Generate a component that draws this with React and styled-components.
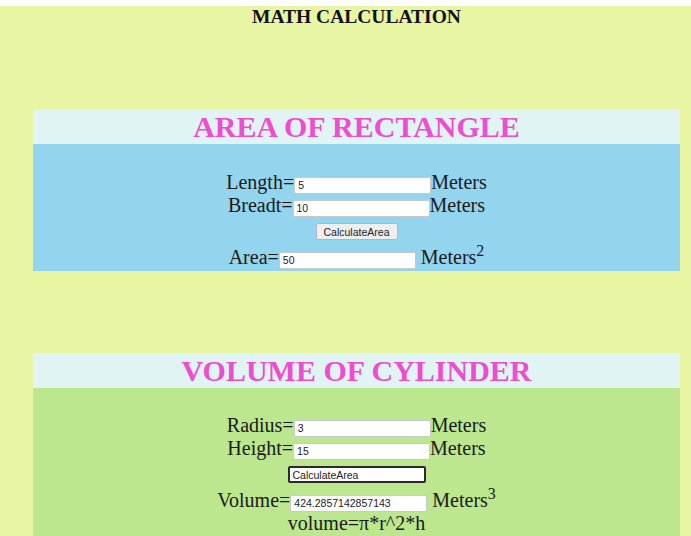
import React from 'react'
import styled, { createGlobalStyle } from 'styled-components'

const GlobalStyle = createGlobalStyle`
  html, body {
    margin: 0;
    padding: 0;
    background: #ffffff;
  }
  body {
    font-family: 'Liberation Serif', 'Times New Roman', serif;
    color: #1a1a1a;
  }
`

const Page = styled.div`
  margin-top: 6px;
  min-height: 530px;
  background: #e8f5a2;
  overflow: hidden;
`

const Column = styled.div`
  margin-left: 33px;
  width: 647px;
  display: flex;
  flex-direction: column;
`

const PageTitle = styled.h3`
  margin: 0;
  font-size: 19.5px;
  line-height: 22px;
  font-weight: bold;
  text-align: center;
  color: #111122;
`

const Card = styled.section`
  margin-top: ${(props) => props.$gap}px;
  display: flex;
  flex-direction: column;
`

const CardHeader = styled.div`
  background: #e0f4f4;
  height: 35px;
  display: flex;
  align-items: center;
  justify-content: center;
`

const CardTitle = styled.h1`
  margin: 0;
  font-size: 30px;
  line-height: 35px;
  font-weight: bold;
  color: #ef4cd2;
`

const CardBody = styled.div`
  background: ${(props) => props.$bg};
  padding: ${(props) => props.$top}px 0 2px;
  display: flex;
  flex-direction: column;
`

const Row = styled.div`
  height: 23px;
  display: flex;
  justify-content: center;
  align-items: baseline;
  font-size: 20px;
  line-height: 23px;
  white-space: pre;
`

const Unit = styled.span`
  margin-left: ${(props) => (props.$spaced ? '5px' : '0')};

  sup {
    font-size: 0.8em;
    line-height: 0;
    vertical-align: 0.5em;
  }
`

const ButtonRow = styled.div`
  height: 29px;
  display: flex;
  justify-content: center;
  align-items: center;
`

const Field = styled.input`
  box-sizing: border-box;
  width: 137px;
  height: 17px;
  padding: 0 3px;
  border: 1px solid #c9c9c9;
  border-radius: 2px;
  background: #ffffff;
  font-family: 'Liberation Sans', Arial, sans-serif;
  font-size: 10.5px;
  color: #222;
  outline: none;
`

const CalcButton = styled.button`
  box-sizing: border-box;
  width: ${(props) => (props.$focused ? '138px' : '82px')};
  height: 17px;
  padding: 0 ${(props) => (props.$focused ? '3px' : '6px')};
  border: ${(props) =>
    props.$focused ? '2px solid #2a2a2a' : '1px solid #b5b5b5'};
  border-radius: 2px;
  background: ${(props) => (props.$focused ? '#ffffff' : '#efefef')};
  font-family: 'Liberation Sans', Arial, sans-serif;
  font-size: 10.5px;
  color: #222;
  text-align: ${(props) => (props.$focused ? 'left' : 'center')};
  cursor: text;
`

const App = () => {
  return (
    <>
      <GlobalStyle />
      <Page>
        <Column>
          <PageTitle>MATH CALCULATION</PageTitle>

          <Card $gap={81}>
            <CardHeader>
              <CardTitle>AREA OF RECTANGLE</CardTitle>
            </CardHeader>
            <CardBody $bg='#93d5ef' $top={27}>
              <Row>
                Length=<Field defaultValue='5' />
                <Unit>Meters</Unit>
              </Row>
              <Row>
                Breadt=<Field defaultValue='10' />
                <Unit>Meters</Unit>
              </Row>
              <ButtonRow>
                <CalcButton>CalculateArea</CalcButton>
              </ButtonRow>
              <Row>
                Area=<Field defaultValue='50' />
                <Unit $spaced>
                  Meters<sup>2</sup>
                </Unit>
              </Row>
            </CardBody>
          </Card>

          <Card $gap={82}>
            <CardHeader>
              <CardTitle>VOLUME OF CYLINDER</CardTitle>
            </CardHeader>
            <CardBody $bg='#bce78f' $top={26}>
              <Row>
                Radius=<Field defaultValue='3' />
                <Unit>Meters</Unit>
              </Row>
              <Row>
                Height=<Field defaultValue='15' />
                <Unit>Meters</Unit>
              </Row>
              <ButtonRow>
                <CalcButton $focused>CalculateArea</CalcButton>
              </ButtonRow>
              <Row>
                Volume=<Field defaultValue='424.2857142857143' />
                <Unit $spaced>
                  Meters<sup>3</sup>
                </Unit>
              </Row>
              <Row>volume=π*r^2*h</Row>
            </CardBody>
          </Card>
        </Column>
      </Page>
    </>
  )
}

export default App
